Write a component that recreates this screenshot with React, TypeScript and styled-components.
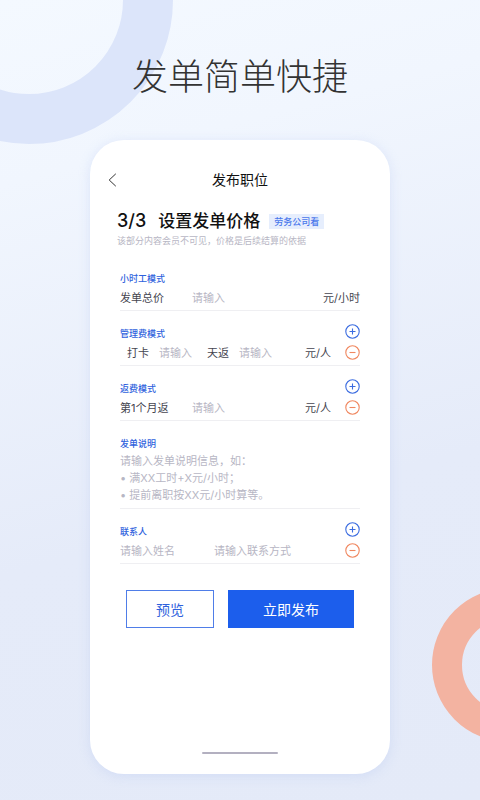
import React from "react";
import styled, { createGlobalStyle, css } from "styled-components";

const sans = `Inter, "Noto Sans CJK SC", sans-serif`;

const GlobalStyle = createGlobalStyle`
  * { box-sizing: border-box; }
  body { margin: 0; background: #e4eaf8; font-family: ${sans}; }
  button, input, textarea { font-family: inherit; }
`;

const Page = styled.main`
  position: relative;
  min-height: 100vh;
  overflow: hidden;
  display: flex;
  flex-direction: column;
  align-items: center;
  padding: 48px 24px 26px;
  background: linear-gradient(165deg, #f4f9ff 0%, #f1f6fe 20%, #e5ebf9 62%, #e4eaf8 100%);
`;

const BlueRing = styled.div`
  position: absolute;
  left: -115px;
  top: -144px;
  width: 288px;
  height: 288px;
  border: 50px solid #dce5fa;
  border-radius: 50%;
`;

const OrangeRing = styled.div`
  position: absolute;
  right: -106px;
  top: 588px;
  width: 154px;
  height: 154px;
  border: 30px solid #f3b3a1;
  border-radius: 50%;
`;

const Slogan = styled.h1`
  position: relative;
  margin: 0 0 34px;
  font-size: 36px;
  line-height: 58px;
  font-weight: 300;
  color: #333;
`;

const Phone = styled.section`
  position: relative;
  flex: 1;
  width: 100%;
  max-width: 300px;
  display: flex;
  flex-direction: column;
  padding: 28px 30px 20px;
  background: #fff;
  border-radius: 34px;
  box-shadow: 0 2px 12px rgba(170, 190, 240, 0.3);
`;

const NavBar = styled.header`
  display: grid;
  grid-template-columns: 24px 1fr 24px;
  align-items: center;
  margin: 0 -12px;
  height: 24px;
`;

const BackButton = styled.button`
  display: flex;
  padding: 0;
  border: 0;
  background: none;
  color: #333;
`;

const NavTitle = styled.h2`
  margin: 0;
  text-align: center;
  font-size: 14px;
  line-height: 24px;
  font-weight: 400;
  color: #111;
`;

const Intro = styled.div`
  margin: 16px -3px 0;
`;

const Heading = styled.div`
  display: flex;
  align-items: center;
  height: 26px;
  white-space: nowrap;
`;

const Step = styled.span`
  margin-right: 12px;
  font-size: 18px;
  line-height: 24px;
  font-weight: 500;
  color: #111;
`;

const StepTitle = styled.h3`
  margin: 0;
  font-size: 17px;
  line-height: 24px;
  font-weight: 500;
  color: #111;
`;

const Tag = styled.span`
  margin-left: 9px;
  padding: 0 5px;
  background: #e6eefd;
  font-size: 9px;
  line-height: 15px;
  font-weight: 500;
  color: #4a78ec;
`;

const Hint = styled.p`
  margin: 0;
  font-size: 9px;
  line-height: 14px;
  color: #b7b6c4;
  white-space: nowrap;
`;

const Form = styled.form`
  display: flex;
  flex-direction: column;
  margin-top: 8px;
`;

const Group = styled.div`
  display: flex;
  flex-direction: column;
  padding: 16px 0 2px;
  border-bottom: 1px solid #efeff2;
`;

const GroupHead = styled.div`
  display: flex;
  align-items: center;
  justify-content: space-between;
  height: 14px;
`;

const groupLabel = css`
  font-size: 9px;
  line-height: 16px;
  font-weight: 500;
  color: #2f62dd;
`;

const GroupTitle = styled.span`
  ${groupLabel}
`;

const GroupLabel = styled.label`
  ${groupLabel}
`;

const Row = styled.div`
  display: flex;
  align-items: center;
  height: 22px;
`;

const FieldLabel = styled.label<{ $width: number; $indent?: boolean }>`
  flex: none;
  width: ${(p) => p.$width}px;
  padding-top: 2px;
  padding-left: ${(p) => (p.$indent ? 7 : 0)}px;
  font-size: 11px;
  line-height: 20px;
  color: #45454f;
  white-space: nowrap;
`;

const fieldText = css`
  padding: 2px 0 0;
  border: 0;
  outline: 0;
  background: none;
  font-size: 11px;
  color: #45454f;
  &::placeholder {
    color: #b7b6c4;
    opacity: 1;
  }
`;

const Field = styled.input<{ $width?: number }>`
  ${fieldText}
  flex: ${(p) => (p.$width ? "none" : "1")};
  width: ${(p) => p.$width ?? 0}px;
  min-width: 0;
  height: 22px;
`;

const Note = styled.textarea`
  ${fieldText}
  display: block;
  width: 100%;
  height: 55px;
  line-height: 17px;
  resize: none;
  overflow: hidden;
`;

const Unit = styled.span<{ $gap?: boolean }>`
  flex: none;
  margin-right: ${(p) => (p.$gap ? 14 : 0)}px;
  padding-top: 2px;
  font-size: 11px;
  line-height: 20px;
  color: #45454f;
`;

const RoundButton = styled.button<{ $tone: "add" | "remove" }>`
  flex: none;
  display: flex;
  padding: 0;
  margin-top: ${(p) => (p.$tone === "add" ? -6 : 0)}px;
  border: 0;
  background: none;
  color: ${(p) => (p.$tone === "add" ? "#3b6ce0" : "#f0875f")};
`;

const Actions = styled.div`
  display: grid;
  grid-template-columns: 88fr 126fr;
  gap: 14px;
  margin: 26px 6px 0;
`;

const ActionButton = styled.button<{ $primary?: boolean }>`
  height: 38px;
  padding: 0;
  border: 1px solid ${(p) => (p.$primary ? "#1c5eec" : "#4f7de8")};
  background: ${(p) => (p.$primary ? "#1c5eec" : "#fff")};
  color: ${(p) => (p.$primary ? "#fff" : "#2f62dd")};
  font-size: 14px;
`;

const HomeBar = styled.div`
  align-self: center;
  width: 76px;
  height: 2px;
  margin-top: auto;
  border-radius: 1px;
  background: #b3b0c0;
`;

function AddButton({ label }: { label: string }) {
  return (
    <RoundButton type="button" $tone="add" aria-label={label}>
      <svg width="15" height="15" viewBox="0 0 15 15" fill="none" stroke="currentColor">
        <circle cx="7.5" cy="7.5" r="6.7" strokeWidth="1.1" />
        <path d="M4.5 7.5h6M7.5 4.5v6" strokeWidth="1.1" />
      </svg>
    </RoundButton>
  );
}

function RemoveButton({ label }: { label: string }) {
  return (
    <RoundButton type="button" $tone="remove" aria-label={label}>
      <svg width="15" height="15" viewBox="0 0 15 15" fill="none" stroke="currentColor">
        <circle cx="7.5" cy="7.5" r="6.7" strokeWidth="1.1" />
        <path d="M4.5 7.5h6" strokeWidth="1.1" />
      </svg>
    </RoundButton>
  );
}

export default function App() {
  return (
    <>
      <GlobalStyle />
      <Page lang="zh-CN">
        <BlueRing />
        <OrangeRing />
        <Slogan>发单简单快捷</Slogan>
        <Phone>
          <NavBar>
            <BackButton type="button" aria-label="返回">
              <svg width="9" height="14" viewBox="0 0 9 14" fill="none" stroke="currentColor">
                <path d="M7.8 0.8L1.2 7l6.6 6.2" />
              </svg>
            </BackButton>
            <NavTitle>发布职位</NavTitle>
          </NavBar>
          <Intro>
            <Heading>
              <Step>3/3</Step>
              <StepTitle>设置发单价格</StepTitle>
              <Tag>劳务公司看</Tag>
            </Heading>
            <Hint>该部分内容会员不可见，价格是后续结算的依据</Hint>
          </Intro>
          <Form>
            <Group>
              <GroupHead>
                <GroupTitle>小时工模式</GroupTitle>
              </GroupHead>
              <Row>
                <FieldLabel htmlFor="total" $width={72}>发单总价</FieldLabel>
                <Field id="total" placeholder="请输入" />
                <Unit>元/小时</Unit>
              </Row>
            </Group>
            <Group>
              <GroupHead>
                <GroupTitle>管理费模式</GroupTitle>
                <AddButton label="添加管理费" />
              </GroupHead>
              <Row>
                <FieldLabel htmlFor="punch" $width={39} $indent>打卡</FieldLabel>
                <Field id="punch" placeholder="请输入" $width={48} />
                <FieldLabel htmlFor="daily" $width={32}>天返</FieldLabel>
                <Field id="daily" placeholder="请输入" />
                <Unit $gap>元/人</Unit>
                <RemoveButton label="删除管理费" />
              </Row>
            </Group>
            <Group>
              <GroupHead>
                <GroupTitle>返费模式</GroupTitle>
                <AddButton label="添加返费" />
              </GroupHead>
              <Row>
                <FieldLabel htmlFor="month" $width={72}>第1个月返</FieldLabel>
                <Field id="month" placeholder="请输入" />
                <Unit $gap>元/人</Unit>
                <RemoveButton label="删除返费" />
              </Row>
            </Group>
            <Group>
              <GroupHead>
                <GroupLabel htmlFor="note">发单说明</GroupLabel>
              </GroupHead>
              <Note
                id="note"
                placeholder={"请输入发单说明信息，如：\n• 满XX工时+X元/小时；\n• 提前离职按XX元/小时算等。"}
              />
            </Group>
            <Group>
              <GroupHead>
                <GroupTitle>联系人</GroupTitle>
                <AddButton label="添加联系人" />
              </GroupHead>
              <Row>
                <Field aria-label="姓名" placeholder="请输入姓名" $width={94} />
                <Field aria-label="联系方式" placeholder="请输入联系方式" />
                <RemoveButton label="删除联系人" />
              </Row>
            </Group>
            <Actions>
              <ActionButton type="button">预览</ActionButton>
              <ActionButton type="submit" $primary>立即发布</ActionButton>
            </Actions>
          </Form>
          <HomeBar />
        </Phone>
      </Page>
    </>
  );
}
